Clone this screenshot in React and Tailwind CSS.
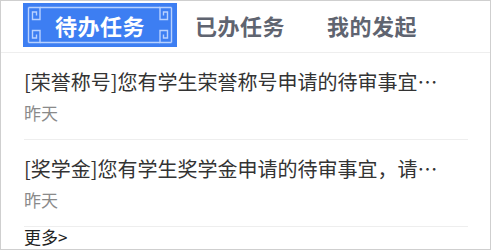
import React from "react";

const items = [
  { id: 1, title: "[荣誉称号]您有学生荣誉称号申请的待审事宜，请及时处理", time: "昨天" },
  { id: 2, title: "[奖学金]您有学生奖学金申请的待审事宜，请及时处理", time: "昨天" },
];

function TabFrame() {
  // blue tab background with the light fret-pattern frame
  return (
    <svg className="absolute inset-0" width="154" height="44" viewBox="0 0 154 44">
      <rect x="0" y="0" width="154" height="44" fill="#3d7ef2" />
      <g fill="none" stroke="#b8d1ff" strokeWidth="1.4">
        <path d="M17 4.5 H137" />
        <path d="M17 39.5 H137" />
        {/* left side */}
        <path d="M5.5 4.5 V39.5" />
        <path d="M5.5 4.5 H17 V16.5 H9.5 V9 H13.5 V12.5" />
        <path d="M5.5 39.5 H17 V27.5 H9.5 V35 H13.5 V31.5" />
        {/* right side */}
        <path d="M148.5 4.5 V39.5" />
        <path d="M148.5 4.5 H137 V16.5 H144.5 V9 H140.5 V12.5" />
        <path d="M148.5 39.5 H137 V27.5 H144.5 V35 H140.5 V31.5" />
      </g>
    </svg>
  );
}

export default function App() {
  return (
    <div
      className="w-[491px] h-[250px] border border-[#cfcfcf] bg-white overflow-hidden"
      style={{ fontFamily: '"Noto Sans CJK SC", "Noto Sans", sans-serif' }}
    >
      <div className="h-[52px] border-b border-[#eeeeee] flex items-start pl-[22px]">
        <div className="relative mt-[2px] w-[154px] h-[44px] flex items-center justify-center">
          <TabFrame />
          <span className="relative text-white text-[22px] font-bold leading-none tracking-[0.5px]">
            待办任务
          </span>
        </div>
        <div className="ml-[18px] mt-[2px] h-[44px] flex items-center text-[22px] font-bold text-[#5f6470] leading-none tracking-[0.5px]">
          已办任务
        </div>
        <div className="ml-[42px] mt-[2px] h-[44px] flex items-center text-[22px] font-bold text-[#5f6470] leading-none tracking-[0.5px]">
          我的发起
        </div>
      </div>

      <ul className="px-[23px]">
        {items.map((item) => (
          <li key={item.id} className="pt-[15px] pb-[13px] border-b border-[#eeeeee] w-[444px]">
            <p className="w-[420px] truncate text-[20px] leading-[28px] text-[#333333]">{item.title}</p>
            <p className="mt-[4px] text-[17px] leading-[26px] text-[#8a8a8a]">{item.time}</p>
          </li>
        ))}
      </ul>
      <div className="px-[23px] pt-[1px] text-[17px] leading-[18px] text-[#222222]">更多&gt;</div>
    </div>
  );
}
